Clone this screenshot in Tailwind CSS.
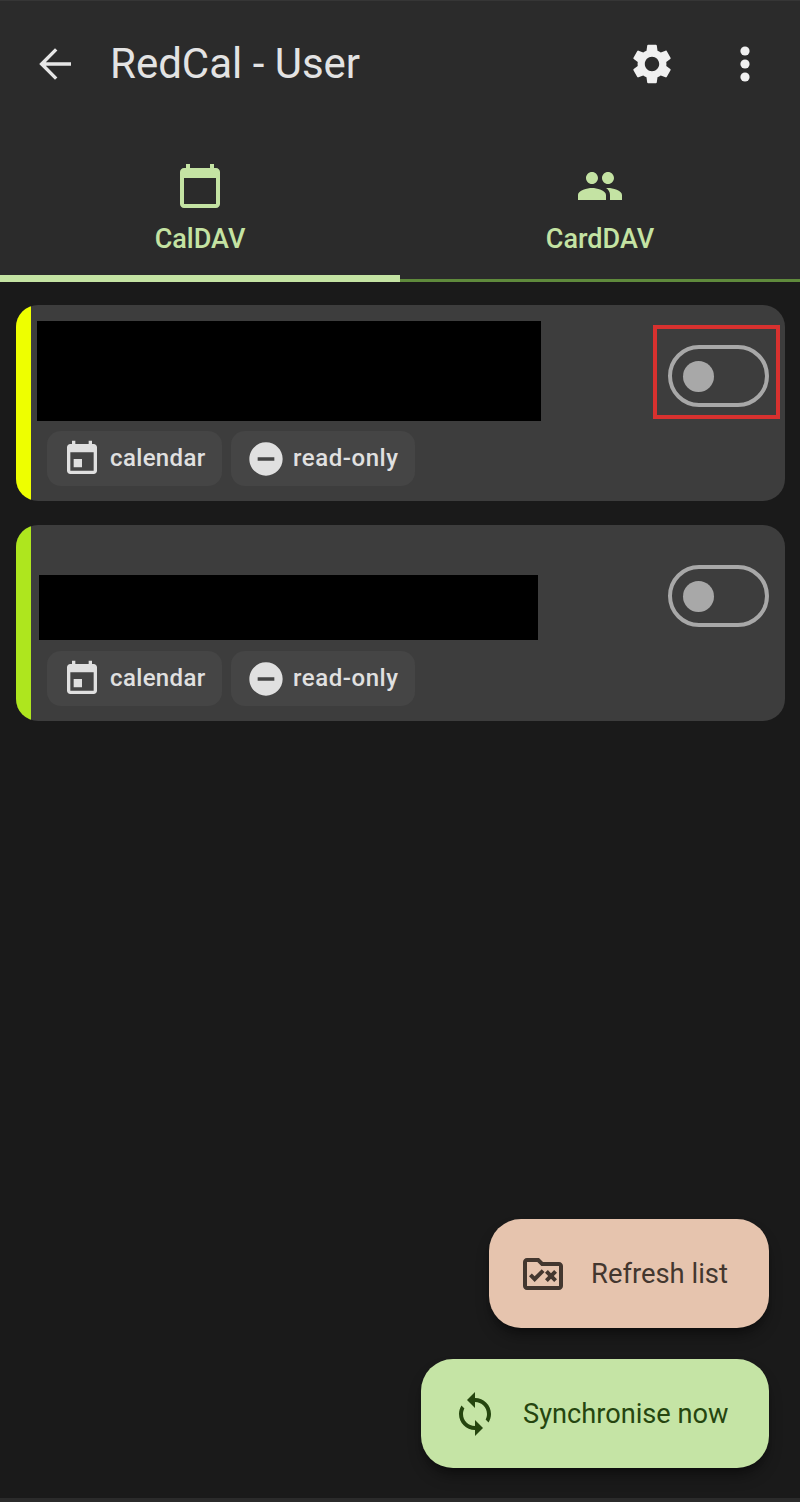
<!DOCTYPE html>
<html lang="en">
<head>
    <meta charset="UTF-8">
    <meta name="viewport" content="width=device-width, initial-scale=1.0">
    <title>RedCal - User</title>
    <script src="https://cdn.jsdelivr.net/npm/@tailwindcss/browser@4"></script>
</head>

<body class="m-0 p-0 bg-[#1a1a1a] overflow-hidden font-['Roboto',sans-serif]">
    <div class="flex flex-col w-[800px] h-[1502px] border-b-[4px] border-[#2b2b2b]">

        <!-- App bar -->
        <header class="bg-[#2b2b2b] border-t border-[#363636]">
            <div class="flex items-center h-[125px] text-[#e6e6e6]">
                <svg viewBox="0 0 24 24" class="w-[48px] h-[48px] ml-[31px] fill-current"><path d="M20 11.1H7.4l5.8-5.8L12 4.1 4.1 12l7.9 7.9 1.2-1.2-5.8-5.8H20z"/></svg>
                <h1 class="ml-[31px] text-[42px] leading-none text-[#e3e3e3] flex-1">RedCal - User</h1>
                <svg viewBox="0 0 24 24" class="w-[48px] h-[48px] fill-[#f0f0f0]"><path d="M19.14 12.94c.04-.3.06-.61.06-.94 0-.32-.02-.64-.07-.94l2.03-1.58c.18-.14.23-.41.12-.61l-1.92-3.32c-.12-.22-.37-.29-.59-.22l-2.39.96c-.5-.38-1.03-.7-1.62-.94l-.36-2.54c-.04-.24-.24-.41-.48-.41h-3.84c-.24 0-.43.17-.47.41l-.36 2.54c-.59.24-1.13.57-1.62.94l-2.39-.96c-.22-.08-.47 0-.59.22L2.74 8.87c-.12.21-.08.47.12.61l2.03 1.58c-.05.3-.09.63-.09.94s.02.64.07.94l-2.03 1.58c-.18.14-.23.41-.12.61l1.92 3.32c.12.22.37.29.59.22l2.39-.96c.5.38 1.03.7 1.62.94l.36 2.54c.05.24.24.41.48.41h3.84c.24 0 .44-.17.47-.41l.36-2.54c.59-.24 1.13-.56 1.62-.94l2.39.96c.22.08.47 0 .59-.22l1.92-3.32c.12-.22.07-.47-.12-.61l-2.01-1.58zM12 15.6c-1.98 0-3.6-1.62-3.6-3.6s1.62-3.6 3.6-3.6 3.6 1.62 3.6 3.6-1.62 3.6-3.6 3.6z"/></svg>
                <svg viewBox="0 0 48 48" class="w-[48px] h-[48px] ml-[45px] mr-[31px] fill-[#f0f0f0]"><circle cx="24" cy="11" r="4.6"/><circle cx="24" cy="24" r="4.6"/><circle cx="24" cy="37" r="4.6"/></svg>
            </div>

            <!-- Tabs -->
            <div class="flex h-[156px] text-[#c4e3a3]">
                <div class="flex-1 flex flex-col items-center">
                    <svg viewBox="0 0 24 24" class="w-[48px] h-[48px] mt-[36px] fill-current"><path d="M20 3h-1V1h-2v2H7V1H5v2H4c-1.1 0-2 .9-2 2v16c0 1.1.9 2 2 2h16c1.1 0 2-.9 2-2V5c0-1.1-.9-2-2-2zm0 18H4V8h16v13z"/></svg>
                    <span class="mt-[13px] text-[27px] leading-[32px] font-medium scale-y-105">CalDAV</span>
                    <div class="mt-auto w-full h-[7px] bg-[#c4e3a3]"></div>
                </div>
                <div class="flex-1 flex flex-col items-center">
                    <svg viewBox="0 0 24 24" class="w-[48px] h-[48px] mt-[36px] fill-current"><path d="M16 11c1.66 0 2.99-1.34 2.99-3S17.66 5 16 5c-1.66 0-3 1.34-3 3s1.34 3 3 3zm-8 0c1.66 0 2.99-1.34 2.99-3S9.66 5 8 5C6.34 5 5 6.34 5 8s1.34 3 3 3zm0 2c-2.33 0-7 1.17-7 3.5V19h14v-2.5c0-2.33-4.67-3.5-7-3.5zm8 0c-.29 0-.62.02-.97.05 1.16.84 1.97 1.97 1.97 3.45V19h6v-2.5c0-2.33-4.67-3.5-7-3.5z"/></svg>
                    <span class="mt-[13px] text-[27px] leading-[32px] font-medium scale-y-105">CardDAV</span>
                    <div class="mt-auto w-full h-[3px] bg-[#5f8a3c]"></div>
                </div>
            </div>
        </header>

        <!-- Collections -->
        <main class="flex-1 flex flex-col gap-[24px] pt-[23px] px-[16px]">

            <div class="relative flex h-[196px] w-[769px] rounded-[22px] overflow-hidden bg-[#3d3d3d]">
                <div class="w-[15px] bg-[#eeff00]"></div>
                <div class="flex-1 flex flex-col">
                    <div class="w-[504px] h-[100px] ml-[6px] mt-[16px] bg-black"></div>
                    <div class="flex gap-[9px] ml-[16px] mt-[10px]">
                        <div class="flex items-center w-[175px] h-[55px] rounded-[14px] bg-[#454545] text-[#e0e0e0]">
                            <svg viewBox="0 0 24 24" class="w-[40px] h-[40px] ml-[15px] fill-current"><path d="M7 12h5v5H7zM16 1v2H8V1H6v2H5c-1.11 0-1.99.9-1.99 2L3 19c0 1.1.89 2 2 2h14c1.1 0 2-.9 2-2V5c0-1.1-.9-2-2-2h-1V1h-2zm3 18H5V8h14v11z"/></svg>
                            <span class="ml-[8px] -mt-[2px] text-[24px] leading-none font-medium tracking-[0.35px]">calendar</span>
                        </div>
                        <div class="flex items-center w-[184px] h-[55px] rounded-[14px] bg-[#454545] text-[#e0e0e0]">
                            <svg viewBox="0 0 24 24" class="w-[40px] h-[40px] ml-[15px] fill-current"><path d="M12 2C6.48 2 2 6.48 2 12s4.48 10 10 10 10-4.48 10-10S17.52 2 12 2zm5 11H7v-2h10v2z"/></svg>
                            <span class="ml-[7px] -mt-[2px] text-[24px] leading-none font-medium tracking-[0.55px]">read-only</span>
                        </div>
                    </div>
                </div>
                <div class="w-[101px] h-[62px] mt-[40px] mr-[16px] rounded-full border-[4px] border-[#a8a8a8] flex items-center pl-[11px]">
                    <div class="w-[31px] h-[31px] rounded-full bg-[#a8a8a8]"></div>
                </div>
                <!-- red highlight box, drawn over the screenshot -->
                <div class="absolute left-[637px] top-[20px] w-[127px] h-[94px] border-[4px] border-[#d8312f]"></div>
            </div>

            <div class="flex h-[196px] w-[769px] rounded-[22px] overflow-hidden bg-[#3d3d3d]">
                <div class="w-[15px] bg-[#aee61e]"></div>
                <div class="flex-1 flex flex-col">
                    <div class="w-[499px] h-[65px] ml-[8px] mt-[50px] bg-black"></div>
                    <div class="flex gap-[9px] ml-[16px] mt-[11px]">
                        <div class="flex items-center w-[175px] h-[55px] rounded-[14px] bg-[#454545] text-[#e0e0e0]">
                            <svg viewBox="0 0 24 24" class="w-[40px] h-[40px] ml-[15px] fill-current"><path d="M7 12h5v5H7zM16 1v2H8V1H6v2H5c-1.11 0-1.99.9-1.99 2L3 19c0 1.1.89 2 2 2h14c1.1 0 2-.9 2-2V5c0-1.1-.9-2-2-2h-1V1h-2zm3 18H5V8h14v11z"/></svg>
                            <span class="ml-[8px] -mt-[2px] text-[24px] leading-none font-medium tracking-[0.35px]">calendar</span>
                        </div>
                        <div class="flex items-center w-[184px] h-[55px] rounded-[14px] bg-[#454545] text-[#e0e0e0]">
                            <svg viewBox="0 0 24 24" class="w-[40px] h-[40px] ml-[15px] fill-current"><path d="M12 2C6.48 2 2 6.48 2 12s4.48 10 10 10 10-4.48 10-10S17.52 2 12 2zm5 11H7v-2h10v2z"/></svg>
                            <span class="ml-[7px] -mt-[2px] text-[24px] leading-none font-medium tracking-[0.55px]">read-only</span>
                        </div>
                    </div>
                </div>
                <div class="w-[101px] h-[62px] mt-[40px] mr-[16px] rounded-full border-[4px] border-[#a8a8a8] flex items-center pl-[11px]">
                    <div class="w-[31px] h-[31px] rounded-full bg-[#a8a8a8]"></div>
                </div>
            </div>
        </main>

        <!-- Floating buttons -->
        <div class="flex flex-col items-end gap-[31px] pr-[31px] pb-[30px]">
            <button class="flex items-center w-[280px] h-[109px] rounded-[32px] bg-[#e6c4ae] text-[#43372f] shadow-lg shadow-black/40">
                <svg viewBox="0 0 24 24" class="w-[48px] h-[48px] ml-[30px] fill-current"><path d="M7.83 16L5 13.17l1.41-1.41 1.41 1.41 3.54-3.54 1.41 1.41L7.83 16zm9.58-3L19 14.59 17.59 16 16 14.41 14.41 16 13 14.59 14.59 13 13 11.41 14.41 10 16 11.59 17.59 10 19 11.41 17.41 13zM20 6h-8l-2-2H4c-1.1 0-1.99.9-1.99 2L2 18c0 1.1.9 2 2 2h16c1.1 0 2-.9 2-2V8c0-1.1-.9-2-2-2zm0 12H4V6h5.17l2 2H20v10z"/></svg>
                <span class="ml-[24px] mt-[2px] text-[27.4px] leading-none">Refresh list</span>
            </button>
            <button class="flex items-center w-[348px] h-[109px] rounded-[32px] bg-[#c5e4a5] text-[#25450f] shadow-lg shadow-black/40">
                <svg viewBox="0 0 24 24" class="w-[48px] h-[48px] ml-[30px] fill-current"><path d="M12 4V1L8 5l4 4V6c3.31 0 6 2.69 6 6 0 1.01-.25 1.97-.7 2.8l1.46 1.46C19.54 15.03 20 13.57 20 12c0-4.42-3.58-8-8-8zm0 14c-3.31 0-6-2.69-6-6 0-1.01.25-1.97.7-2.8L5.24 7.74C4.46 8.97 4 10.43 4 12c0 4.42 3.58 8 8 8v3l4-4-4-4v3z"/></svg>
                <span class="ml-[24px] mt-[2px] text-[27.2px] leading-none">Synchronise now</span>
            </button>
        </div>
    </div>
</body>
</html>
